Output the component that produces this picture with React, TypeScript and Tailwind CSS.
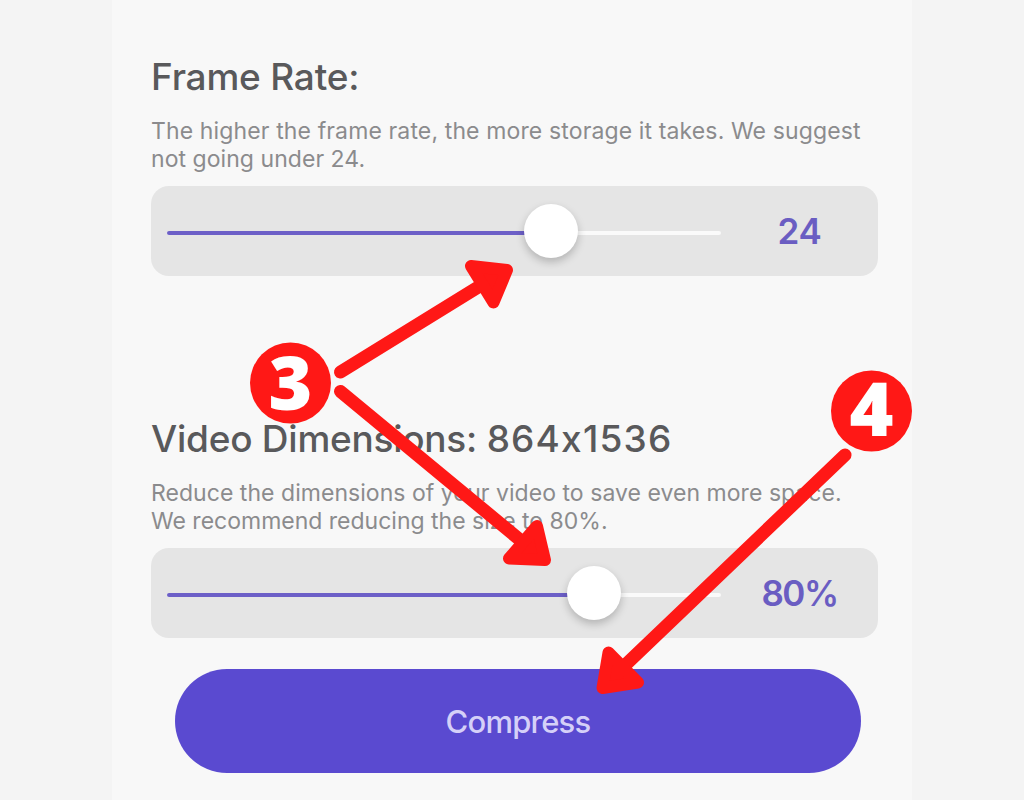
import type { ReactNode } from "react";

type SettingProps = {
  title: ReactNode;
  titleClass: string;
  lines: { text: string; className: string }[];
  value: string;
  valueClass: string;
  percent: number;
};

function Setting({ title, titleClass, lines, value, valueClass, percent }: SettingProps) {
  return (
    <section className="flex w-[727px] flex-col">
      <h2 className={`h-[44px] whitespace-nowrap text-[37px] font-medium leading-[44px] text-[#59595b] ${titleClass}`}>{title}</h2>
      <div className="mt-[18px] flex flex-col text-[23px] leading-[28px] text-[#8b8b8d]">
        {lines.map((line) => (
          <p key={line.text} className={`whitespace-nowrap ${line.className}`}>
            {line.text}
          </p>
        ))}
      </div>
      <div className="mt-[13px] flex h-[90px] items-center rounded-[18px] bg-[#e5e5e5] pl-4">
        <div className="relative h-1 w-[554px] shrink-0 translate-y-[2px] rounded-full bg-[#fafafa]">
          <div className="h-full rounded-full bg-[#6c5fc7]" style={{ width: `${percent}%` }} />
          <div
            className="absolute top-1/2 size-[54px] -translate-x-1/2 -translate-y-[29px] rounded-full bg-white shadow-[0_4px_8px_rgba(0,0,0,0.22)]"
            style={{ left: `${percent}%` }}
          />
        </div>
        <span className={`flex-1 text-center text-[35px] font-semibold text-[#6a5dc2] ${valueClass}`}>{value}</span>
      </div>
    </section>
  );
}

type ArrowProps = { from: [number, number]; to: [number, number]; head: string };

function Arrow({ from, to, head }: ArrowProps) {
  return (
    <g stroke="#ff1816" strokeLinecap="round" strokeLinejoin="round">
      <line x1={from[0]} y1={from[1]} x2={to[0]} y2={to[1]} strokeWidth="13" />
      <polygon points={head} fill="#ff1816" strokeWidth="12" />
    </g>
  );
}

function StepBadge({ x, y, baseline, label }: { x: number; y: number; baseline: number; label: string }) {
  return (
    <g>
      <circle cx={x} cy={y} r="40.5" fill="#ff1816" />
      <text
        x={x}
        y={baseline}
        textAnchor="middle"
        fill="#ffffff"
        className="font-['Open_Sans',sans-serif] text-[75px] font-extrabold"
      >
        {label}
      </text>
    </g>
  );
}

export default function App() {
  return (
    <div className="relative flex h-[800px] w-[1024px] justify-center overflow-hidden bg-[#f4f4f4] font-['Inter',sans-serif] [font-feature-settings:'calt'_0]">
      <main className="flex w-[800px] flex-col bg-[#f8f8f8] pl-[39px] pt-[55px]">
        <Setting
          title="Frame Rate:"
          titleClass="tracking-[-0.2px]"
          lines={[
            { text: "The higher the frame rate, the more storage it takes. We suggest", className: "tracking-[0.13px]" },
            { text: "not going under 24.", className: "tracking-[0.05px]" },
          ]}
          value="24"
          valueClass="tracking-[-0.4px]"
          percent={69.3}
        />
        <div className="h-[141px]" />
        <Setting
          title={
            <>
              Video Dimensions: <span className="tracking-[1.2px]">864x1536</span>
            </>
          }
          titleClass="tracking-[-0.25px]"
          lines={[
            { text: "Reduce the dimensions of your video to save even more space.", className: "tracking-[0.04px]" },
            { text: "We recommend reducing the size to 80%.", className: "tracking-[0px]" },
          ]}
          value="80%"
          valueClass="tracking-[-1.5px]"
          percent={77}
        />
        <button className="ml-[24px] mt-[31px] flex h-[104px] w-[686px] items-center justify-center rounded-full bg-[#5a4ad0] pt-[2px] text-[31px] font-medium tracking-[-0.8px] text-[#d5d0f8]">
          Compress
        </button>
      </main>
      <svg className="pointer-events-none absolute inset-0" width="1024" height="800" viewBox="0 0 1024 800">
        <Arrow from={[340.5, 372]} to={[488, 281]} head="471,266 507,270 493.5,302.5" />
        <Arrow from={[340.5, 391.5]} to={[525, 544]} head="537,526 509,558.5 545,560" />
        <Arrow from={[845, 455]} to={[618, 672]} head="608.5,652.5 602.5,688 638,682.5" />
        <StepBadge x={290.5} y={383} baseline={410} label="3" />
        <StepBadge x={871.5} y={411} baseline={436} label="4" />
      </svg>
    </div>
  );
}
